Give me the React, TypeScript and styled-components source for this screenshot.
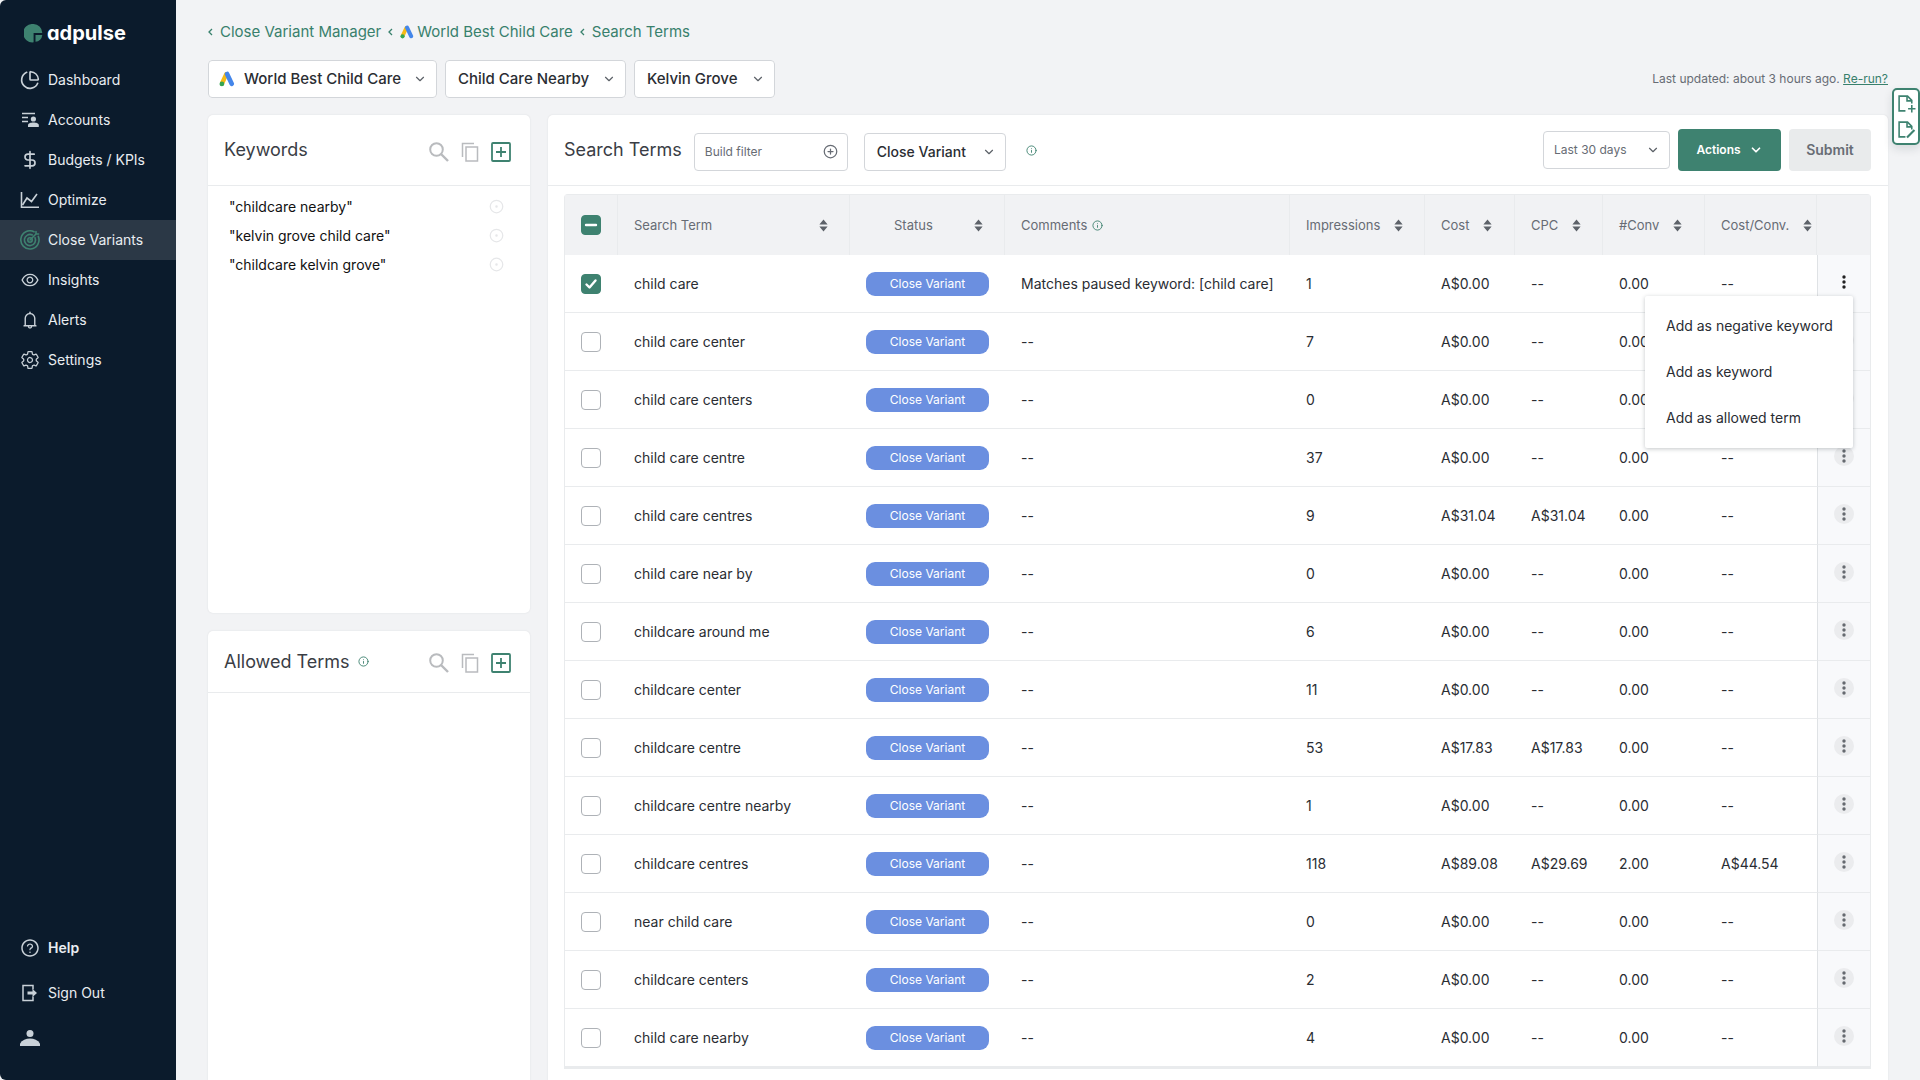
import React from "react";
import styled, { createGlobalStyle, css } from "styled-components";
import { ChartPie, DollarSign, ChevronDown, CirclePlus, CircleDot, Info } from "lucide-react";
import { AiOutlineEye, AiOutlineBell, AiOutlineQuestionCircle } from "react-icons/ai";
import { IoSettingsOutline } from "react-icons/io5";

const c = {
  navy: "#0b1b2c",
  navyActive: "#2b3846",
  page: "#f2f3f5",
  green: "#3e8270",
  link: "#38806c",
  border: "#d3d6da",
  line: "#e9ebed",
  head: "#f1f2f4",
  ink: "#2a2d33",
  muted: "#676c74",
  pill: "#6b8fe0",
};

const GlobalStyle = createGlobalStyle`
  *, *::before, *::after { box-sizing: border-box; }
  body {
    margin: 0;
    background: ${c.page};
    color: ${c.ink};
    font-family: Inter, "Liberation Sans", sans-serif;
    font-size: 14px;
    line-height: 20px;
  }
  button, input, select { font: inherit; color: inherit; }
`;

const Shell = styled.div`
  display: grid;
  grid-template-columns: 176px minmax(0, 1fr);
  height: 100vh;
  min-height: 800px;
  overflow: hidden;
`;

const Sidebar = styled.nav`
  display: flex;
  flex-direction: column;
  background: ${c.navy};
  border-radius: 6px 0 0 6px;
  color: #e9edf1;
  padding: 16px 0 20px;
`;

const Logo = styled.a`
  display: flex;
  align-items: center;
  gap: 4px;
  height: 34px;
  margin-bottom: 10px;
  padding-left: 24px;
  color: #fff;
  font-size: 20px;
  font-weight: 700;
  font-feature-settings: "cv11";
  text-decoration: none;
`;

const NavLink = styled.a<{ $active?: boolean; $bold?: boolean; $tall?: boolean }>`
  display: flex;
  align-items: center;
  gap: 8px;
  height: ${(p) => (p.$tall ? 45 : 40)}px;
  padding-left: 20px;
  color: inherit;
  font-weight: ${(p) => (p.$bold ? 600 : 400)};
  text-decoration: none;
  background: ${(p) => (p.$active ? c.navyActive : "transparent")};
  svg {
    flex: none;
    width: 20px;
    height: 20px;
    color: ${(p) => (p.$active ? c.green : "#c9d1d8")};
  }
`;

const NavBottom = styled.div`
  margin-top: auto;
`;

const Main = styled.main`
  display: flex;
  flex-direction: column;
  min-width: 0;
  padding: 20px 32px 0;
`;

const Crumbs = styled.nav`
  display: flex;
  align-items: center;
  gap: 7px;
  height: 24px;
  color: ${c.link};
  font-size: 15px;
  a {
    display: flex;
    align-items: center;
    gap: 3px;
    color: inherit;
    text-decoration: none;
  }
`;

const TopRow = styled.div`
  display: flex;
  align-items: center;
  gap: 8px;
  margin: 16px 0 17px;
`;

const Updated = styled.p`
  margin: 0 0 0 auto;
  color: ${c.muted};
  font-size: 12px;
  a { color: ${c.link}; }
`;

const Picker = styled.label<{ $w: number }>`
  display: grid;
  grid-template: 38px / minmax(0, 1fr);
  align-items: center;
  width: ${(p) => p.$w}px;
  background: #fff;
  border-radius: 4px;
  > * { grid-area: 1 / 1; }
  > svg { pointer-events: none; z-index: 1; }
`;

const Select = styled.select<{ $icon?: boolean; $size?: number; $quiet?: boolean }>`
  appearance: none;
  height: 100%;
  width: 100%;
  padding: 0 28px 0 ${(p) => (p.$icon ? 35 : p.$quiet ? 10 : 12)}px;
  border: 1px solid ${c.border};
  border-radius: 4px;
  background: transparent;
  color: ${(p) => (p.$quiet ? c.muted : c.ink)};
  font-size: ${(p) => p.$size ?? 15}px;
  font-weight: ${(p) => (p.$quiet ? 400 : 500)};
`;

const Caret = styled(ChevronDown)`
  justify-self: end;
  margin-right: 10px;
  width: 14px;
  height: 14px;
  color: #5c6168;
`;

const LeadingIcon = styled.span`
  display: flex;
  padding-left: 11px;
  pointer-events: none;
`;

const Workspace = styled.div`
  flex: 1;
  display: grid;
  grid-template-columns: 322px minmax(0, 1fr);
  gap: 18px;
  min-height: 0;
`;

const LeftColumn = styled.div`
  display: flex;
  flex-direction: column;
  gap: 18px;
`;

const Panel = styled.section<{ $grow?: number; $open?: boolean }>`
  flex: ${(p) => p.$grow ?? 1} 1 0;
  min-width: 0;
  background: #fff;
  border-radius: ${(p) => (p.$open ? "5px 5px 0 0" : "5px")};
  box-shadow: 0 0 2px rgba(30, 40, 50, 0.1);
`;

const PanelHead = styled.header<{ $short?: boolean }>`
  display: flex;
  align-items: center;
  height: ${(p) => (p.$short ? 62 : 71)}px;
  padding: 0 17px 0 16px;
  border-bottom: 1px solid ${c.line};
`;

const Title = styled.h2`
  margin: 0;
  color: #3a3d45;
  font-size: 18px;
  font-weight: 400;
  line-height: 24px;
`;

const IconRow = styled.div`
  display: flex;
  align-items: center;
  gap: 12px;
  margin-left: auto;
  padding: 3px 2px 0 0;
`;

const FilterRow = styled.div`
  display: flex;
  align-items: center;
  gap: 16px;
  margin-left: 12px;
  padding-top: 3px;
`;

const IconButton = styled.button<{ $tone?: string }>`
  display: flex;
  align-items: center;
  justify-content: center;
  padding: 0;
  border: 0;
  background: none;
  color: ${(p) => p.$tone ?? "#b9bbbe"};
`;

const HintButton = styled(IconButton)<{ $gap?: number }>`
  color: ${c.green};
  margin-left: ${(p) => p.$gap ?? 8}px;
`;

const KeywordList = styled.ul`
  margin: 0;
  padding: 6px 26px 0 21px;
  list-style: none;
  color: #111;
`;

const Keyword = styled.li`
  display: flex;
  align-items: center;
  justify-content: space-between;
  height: 29px;
`;

const FilterBox = styled.label`
  display: flex;
  align-items: center;
  width: 154px;
  height: 38px;
  padding: 0 9px 0 10px;
  border: 1px solid ${c.border};
  border-radius: 4px;
  color: ${c.muted};
  input {
    flex: 1;
    min-width: 0;
    padding: 0;
    border: 0;
    outline: 0;
    font-size: 12px;
    background: none;
  }
  input::placeholder { color: ${c.muted}; opacity: 1; }
`;

const HeadActions = styled.div`
  display: flex;
  align-items: center;
  gap: 8px;
  margin-left: auto;
`;

const Button = styled.button<{ $primary?: boolean }>`
  display: flex;
  align-items: center;
  justify-content: center;
  gap: 8px;
  width: ${(p) => (p.$primary ? 103 : 82)}px;
  height: 42px;
  border: 0;
  border-radius: 4px;
  background: ${(p) => (p.$primary ? c.green : "#e9ebec")};
  color: ${(p) => (p.$primary ? "#fff" : "#686d75")};
  font-size: ${(p) => (p.$primary ? 12 : 14)}px;
  font-weight: 600;
`;

const TableWrap = styled.div`
  margin: 8px 17px 0 16px;
  border: 1px solid ${c.line};
  border-bottom-width: 2px;
  border-radius: 4px 4px 0 0;
`;

const Table = styled.table`
  width: 100%;
  table-layout: fixed;
  border-collapse: separate;
  border-spacing: 0;
`;

const cell = css`
  padding: 0 0 0 16px;
  text-align: left;
  white-space: nowrap;
`;

const Th = styled.th`
  ${cell}
  height: 60px;
  background: ${c.head};
  border-right: 1px solid ${c.line};
  color: ${c.muted};
  font-size: 13px;
  font-weight: 400;
  &:last-child { border-right: 0; }
`;

const HeadLabel = styled.div<{ $spread?: boolean; $inset?: boolean }>`
  display: flex;
  align-items: center;
  justify-content: ${(p) => (p.$spread ? "space-between" : "flex-start")};
  gap: ${(p) => (p.$inset ? 5 : 14)}px;
  padding: ${(p) => (p.$spread ? "0 21px 0 0" : "0")};
`;

const StatusLabel = styled(HeadLabel)`
  padding-left: 28px;
`;

const Td = styled.td<{ $menu?: boolean }>`
  ${cell}
  height: 58px;
  border-bottom: 1px solid ${c.line};
  ${(p) =>
    p.$menu &&
    css`
      padding: 0 0 4px;
      background: #f8f9fb;
      border-left: 1px solid #dfe2e5;
    `}
`;

const Tick = styled.input`
  appearance: none;
  display: block;
  width: 20px;
  height: 20px;
  margin: 0;
  border: 1px solid #aeb2b7;
  border-radius: 4px;
  background: #fff center / 14px 14px no-repeat;
  &:checked, &:indeterminate {
    border-color: ${c.green};
    background-color: ${c.green};
  }
  &:checked {
    background-image: url("data:image/svg+xml,%3Csvg xmlns='http://www.w3.org/2000/svg' viewBox='0 0 14 14' fill='none' stroke='white' stroke-width='2.4' stroke-linecap='round' stroke-linejoin='round'%3E%3Cpath d='M2.5 7.5l3 3 6-7'/%3E%3C/svg%3E");
  }
  &:indeterminate {
    background-image: url("data:image/svg+xml,%3Csvg xmlns='http://www.w3.org/2000/svg' viewBox='0 0 14 14' stroke='white' stroke-width='2.4' stroke-linecap='round'%3E%3Cpath d='M2 7h10'/%3E%3C/svg%3E");
  }
`;

const Pill = styled.span`
  display: block;
  width: 123px;
  height: 24px;
  border-radius: 9px;
  background: ${c.pill};
  color: #fff;
  font-size: 12px;
  line-height: 24px;
  text-align: center;
`;

const MenuAnchor = styled.div`
  position: relative;
  display: flex;
  justify-content: center;
`;

const RowMenuButton = styled.button<{ $open?: boolean }>`
  display: flex;
  align-items: center;
  justify-content: center;
  width: 20px;
  height: 20px;
  padding: 0;
  border: 0;
  border-radius: 50%;
  background: ${(p) => (p.$open ? "transparent" : "#ebecee")};
  color: ${(p) => (p.$open ? "#222" : "#666a70")};
`;

const Menu = styled.div`
  position: absolute;
  z-index: 5;
  top: 24px;
  right: 17px;
  width: 208px;
  padding: 7px 0;
  background: #fff;
  border-radius: 2px;
  box-shadow: 0 1px 4px rgba(20, 30, 40, 0.25);
`;

const MenuItem = styled.button`
  display: block;
  width: 100%;
  height: 46px;
  padding: 0 0 0 21px;
  border: 0;
  background: none;
  text-align: left;
  white-space: nowrap;
`;

const NotesDock = styled.aside`
  position: fixed;
  top: 88px;
  right: 0;
  display: flex;
  flex-direction: column;
  justify-content: space-around;
  align-items: center;
  width: 28px;
  height: 57px;
  background: #fff;
  border: 2px solid ${c.green};
  border-radius: 5px;
  box-shadow: 0 4px 10px rgba(20, 30, 40, 0.12);
`;

const AdsMark = ({ size = 16 }: { size?: number }) => (
  <svg width={size} height={size} viewBox="0 0 16 16" fill="none" aria-hidden="true">
    <path d="M7.2 3.4 3.2 12" stroke="#f6bb16" strokeWidth="4.4" strokeLinecap="round" />
    <path d="M8.1 3l4.6 9.8" stroke="#4486ea" strokeWidth="4.6" strokeLinecap="round" />
    <circle cx="2.9" cy="12.9" r="2.4" fill="#35a552" />
  </svg>
);

const LogoMark = () => (
  <svg width="19" height="19" viewBox="0 0 19 19" aria-hidden="true">
    <path d="M9 0a9 9 0 0 1 9.3 9H9.6v9.3A9.2 9.2 0 1 1 9 0z" fill={c.green} />
    <path d="M11.5 11h6.8a7.5 7.5 0 0 1-6.8 6.8z" fill={c.green} />
  </svg>
);

const AccountsIcon = () => (
  <svg viewBox="0 0 20 20" aria-hidden="true">
    <path d="M2 3.5h13M2 7.5h6M2 11.5h6" stroke="currentColor" strokeWidth="1.6" />
    <circle cx="13.4" cy="9" r="2.6" fill="currentColor" />
    <path d="M8 17v-1.6c0-2 2.6-2.8 5.4-2.8s5.4.8 5.4 2.8V17z" fill="currentColor" />
  </svg>
);

const OptimizeIcon = () => (
  <svg viewBox="0 0 20 20" fill="none" stroke="currentColor" strokeWidth="1.6" aria-hidden="true">
    <path d="M1.5 2v15.200H19" />
    <path d="M2.500 15 7 8l4.500 3.500L17 4" />
  </svg>
);

const TargetIcon = () => (
  <svg viewBox="0 0 20 20" fill="none" stroke="currentColor" strokeWidth="1.6" strokeLinecap="round" aria-hidden="true">
    <path d="M18.3 6.400A9.100 9.100 0 1 1 14 1.800" />
    <path d="M15 7.600A5.600 5.600 0 1 1 12.400 5" />
    <circle cx="10" cy="10" r="2.200" />
    <path d="m10 10 6-6V1.500M16 4h2.600" />
  </svg>
);

const SignOutIcon = () => (
  <svg viewBox="0 0 20 20" aria-hidden="true">
    <path d="M13 6.500V2.500H3v15h10v-4" fill="none" stroke="currentColor" strokeWidth="1.500" />
    <path d="M7.500 8.600h5V6l4.500 4-4.500 4v-2.600h-5z" fill="currentColor" />
  </svg>
);

const UserIcon = () => (
  <svg viewBox="0 0 20 20" aria-hidden="true">
    <circle cx="10" cy="5.500" r="3.500" fill="currentColor" />
    <path d="M0 18v-2.600C2 12 6 10.500 10 10.500s8 1.500 10 4.900V18z" fill="currentColor" />
  </svg>
);

const PlusBox = () => (
  <svg width="20" height="20" viewBox="0 0 20 20" fill="none" stroke={c.green} aria-hidden="true">
    <rect x="1" y="1" width="18" height="18" rx="1" strokeWidth="1.800" />
    <path d="M10 5v10M5 10h10" strokeWidth="1.800" />
  </svg>
);

const SearchIcon = () => (
  <svg width="20" height="20" viewBox="0 0 20 20" fill="none" stroke="currentColor" strokeWidth="2" aria-hidden="true">
    <circle cx="7.500" cy="7.500" r="6.300" />
    <path d="m12 12 7 7" strokeWidth="2.400" />
  </svg>
);

const CopyIcon = () => (
  <svg width="18" height="20" viewBox="0 0 18 20" fill="none" stroke="currentColor" strokeWidth="1.500" aria-hidden="true">
    <path d="M1.500 15V1.500H13" />
    <path d="M5 5h11.500v14H5z" />
  </svg>
);

const Sorter = () => (
  <svg width="9" height="13" viewBox="0 0 8 12" fill="#5d6269" aria-hidden="true">
    <path d="M4 0.500 7.800 5H0.200zM4 11.500 0.200 7h7.600z" />
  </svg>
);

const Dots = () => (
  <svg width="4" height="14" viewBox="0 0 4 14" fill="currentColor" aria-hidden="true">
    <circle cx="2" cy="2" r="1.700" />
    <circle cx="2" cy="7" r="1.700" />
    <circle cx="2" cy="12" r="1.700" />
  </svg>
);

const CrumbArrow = () => (
  <svg width="5" height="8" viewBox="0 0 5 8" fill="none" stroke={c.link} strokeWidth="1.300" aria-hidden="true">
    <path d="M4 1 1 4l3 3" />
  </svg>
);

const NoteIcon = ({ edit }: { edit?: boolean }) => (
  <svg width="19" height="19" viewBox="0 0 18 18" fill="none" stroke={c.green} strokeWidth="1.500" aria-hidden="true">
    <path d="M8 16H2V2h8l4 4v3" />
    <path d="M9.500 2v4.500H14" />
    {edit ? <path d="m9.500 16.500 7-7" strokeWidth="2" /> : <path d="M14 10.500v7M10.500 14h7" />}
  </svg>
);

const Hint = ({ gap, label }: { gap?: number; label: string }) => (
  <HintButton type="button" $gap={gap} aria-label={label}>
    <Info size={11} strokeWidth={2} />
  </HintButton>
);

type Row = [string, string, string, string, string, string, string];
const rows: Row[] = [
  ["child care", "Matches paused keyword: [child care]", "1", "A$0.00", "--", "0.00", "--"],
  ["child care center", "--", "7", "A$0.00", "--", "0.00", "--"],
  ["child care centers", "--", "0", "A$0.00", "--", "0.00", "--"],
  ["child care centre", "--", "37", "A$0.00", "--", "0.00", "--"],
  ["child care centres", "--", "9", "A$31.04", "A$31.04", "0.00", "--"],
  ["child care near by", "--", "0", "A$0.00", "--", "0.00", "--"],
  ["childcare around me", "--", "6", "A$0.00", "--", "0.00", "--"],
  ["childcare center", "--", "11", "A$0.00", "--", "0.00", "--"],
  ["childcare centre", "--", "53", "A$17.83", "A$17.83", "0.00", "--"],
  ["childcare centre nearby", "--", "1", "A$0.00", "--", "0.00", "--"],
  ["childcare centres", "--", "118", "A$89.08", "A$29.69", "2.00", "A$44.54"],
  ["near child care", "--", "0", "A$0.00", "--", "0.00", "--"],
  ["childcare centers", "--", "2", "A$0.00", "--", "0.00", "--"],
  ["child care nearby", "--", "4", "A$0.00", "--", "0.00", "--"],
];

const nav = [
  { label: "Dashboard", icon: <ChartPie strokeWidth={2} /> },
  { label: "Accounts", icon: <AccountsIcon /> },
  { label: "Budgets / KPIs", icon: <DollarSign strokeWidth={2} /> },
  { label: "Optimize", icon: <OptimizeIcon /> },
  { label: "Close Variants", icon: <TargetIcon />, active: true },
  { label: "Insights", icon: <AiOutlineEye /> },
  { label: "Alerts", icon: <AiOutlineBell /> },
  { label: "Settings", icon: <IoSettingsOutline /> },
];

const PanelTools = ({ name }: { name: string }) => (
  <IconRow>
    <IconButton type="button" aria-label={`Search ${name}`}><SearchIcon /></IconButton>
    <IconButton type="button" aria-label={`Copy ${name}`}><CopyIcon /></IconButton>
    <IconButton type="button" aria-label={`Add ${name}`}><PlusBox /></IconButton>
  </IconRow>
);

export default function App() {
  return (
    <>
      <GlobalStyle />
      <Shell>
        <Sidebar>
          <Logo href="#"><LogoMark />adpulse</Logo>
          {nav.map((n) => (
            <NavLink key={n.label} href="#" $active={n.active}>{n.icon}{n.label}</NavLink>
          ))}
          <NavBottom>
            <NavLink href="#" $bold $tall><AiOutlineQuestionCircle />Help</NavLink>
            <NavLink href="#" $tall><SignOutIcon />Sign Out</NavLink>
            <NavLink href="#" $tall aria-label="Profile"><UserIcon /></NavLink>
          </NavBottom>
        </Sidebar>
        <Main>
          <Crumbs>
            <CrumbArrow /><a href="#">Close Variant Manager</a>
            <CrumbArrow /><a href="#"><AdsMark size={14} />World Best Child Care</a>
            <CrumbArrow /><a href="#">Search Terms</a>
          </Crumbs>
          <TopRow>
            <Picker $w={229}>
              <LeadingIcon><AdsMark size={16} /></LeadingIcon>
              <Select $icon aria-label="Account"><option>World Best Child Care</option></Select>
              <Caret />
            </Picker>
            <Picker $w={181}>
              <Select aria-label="Campaign"><option>Child Care Nearby</option></Select>
              <Caret />
            </Picker>
            <Picker $w={141}>
              <Select aria-label="Ad group"><option>Kelvin Grove</option></Select>
              <Caret />
            </Picker>
            <Updated>Last updated: about 3 hours ago. <a href="#">Re-run?</a></Updated>
          </TopRow>
          <Workspace>
            <LeftColumn>
              <Panel $grow={10}>
                <PanelHead><Title>Keywords</Title><PanelTools name="keywords" /></PanelHead>
                <KeywordList>
                  {['"childcare nearby"', '"kelvin grove child care"', '"childcare kelvin grove"'].map((k) => (
                    <Keyword key={k}>
                      {k}
                      <IconButton type="button" $tone="#e6e7e9" aria-label={`Remove ${k}`}>
                        <CircleDot size={15} />
                      </IconButton>
                    </Keyword>
                  ))}
                </KeywordList>
              </Panel>
              <Panel $grow={9} $open>
                <PanelHead $short>
                  <Title>Allowed Terms</Title>
                  <Hint label="About allowed terms" />
                  <PanelTools name="allowed terms" />
                </PanelHead>
              </Panel>
            </LeftColumn>
            <Panel $open>
              <PanelHead>
                <Title>Search Terms</Title>
                <FilterRow>
                  <FilterBox>
                    <input aria-label="Build filter" placeholder="Build filter" />
                    <CirclePlus size={15} />
                  </FilterBox>
                  <Picker $w={142}>
                    <Select $size={14} aria-label="Status filter"><option>Close Variant</option></Select>
                    <Caret />
                  </Picker>
                </FilterRow>
                <Hint gap={20} label="About statuses" />
                <HeadActions>
                  <Picker $w={127}>
                    <Select $quiet $size={12} aria-label="Date range"><option>Last 30 days</option></Select>
                    <Caret />
                  </Picker>
                  <Button type="button" $primary>Actions<ChevronDown size={14} strokeWidth={3} /></Button>
                  <Button type="button">Submit</Button>
                </HeadActions>
              </PanelHead>
              <TableWrap>
                <Table>
                  <colgroup>
                    <col width={53} /><col width={232} /><col width={155} /><col />
                    <col width={135} /><col width={90} /><col width={88} /><col width={102} />
                    <col width={112} /><col width={53} />
                  </colgroup>
                  <thead>
                    <tr>
                      <Th>
                        <Tick
                          type="checkbox"
                          aria-label="Select all"
                          ref={(el: HTMLInputElement | null) => { if (el) el.indeterminate = true; }}
                        />
                      </Th>
                      <Th><HeadLabel $spread>Search Term<Sorter /></HeadLabel></Th>
                      <Th><StatusLabel $spread>Status<Sorter /></StatusLabel></Th>
                      <Th><HeadLabel $inset>Comments<Hint gap={0} label="About comments" /></HeadLabel></Th>
                      {["Impressions", "Cost", "CPC", "#Conv", "Cost/Conv."].map((h) => (
                        <Th key={h}><HeadLabel>{h}<Sorter /></HeadLabel></Th>
                      ))}
                      <Th aria-label="Row actions" />
                    </tr>
                  </thead>
                  <tbody>
                    {rows.map(([term, ...rest], i) => (
                      <tr key={term}>
                        <Td><Tick type="checkbox" aria-label={`Select ${term}`} defaultChecked={i === 0} /></Td>
                        <Td>{term}</Td>
                        <Td><Pill>Close Variant</Pill></Td>
                        {rest.map((v, j) => <Td key={j}>{v}</Td>)}
                        <Td $menu>
                          <MenuAnchor>
                            <RowMenuButton type="button" $open={i === 0} aria-label={`Actions for ${term}`}><Dots /></RowMenuButton>
                            {i === 0 && (
                              <Menu>
                                <MenuItem type="button">Add as negative keyword</MenuItem>
                                <MenuItem type="button">Add as keyword</MenuItem>
                                <MenuItem type="button">Add as allowed term</MenuItem>
                              </Menu>
                            )}
                          </MenuAnchor>
                        </Td>
                      </tr>
                    ))}
                  </tbody>
                </Table>
              </TableWrap>
            </Panel>
          </Workspace>
        </Main>
      </Shell>
      <NotesDock>
        <IconButton type="button" aria-label="Add note"><NoteIcon /></IconButton>
        <IconButton type="button" aria-label="Edit note"><NoteIcon edit /></IconButton>
      </NotesDock>
    </>
  );
}
